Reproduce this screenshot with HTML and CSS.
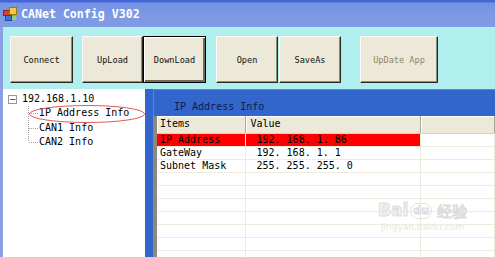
FILE: index.html
```html
<!DOCTYPE html>
<html>
	<head>
		<meta charset="UTF-8">
		<title>CANet Config V302</title>
		<link rel="stylesheet" href="styles.css">
	</head>
	<body>
		<div class="titlebar">
			<svg class="appicon" width="14" height="14" viewBox="0 0 14 14">
				<rect x="0.5" y="3.5" width="6" height="5" fill="#e03c28" stroke="#7a2a20"/>
				<rect x="6.5" y="0.5" width="7" height="7" fill="#f6c83a" stroke="#9a7a18"/>
				<rect x="2.5" y="8.5" width="6" height="5" fill="#3c78d8" stroke="#23468a"/>
				<rect x="9" y="9" width="4" height="4" fill="#9ad06a"/>
			</svg>
			<span class="title">CANet Config V302</span>
		</div>
		<div class="client">
			<div class="toolbar">
				<button class="btn">Connect</button>
				<button class="btn up">UpLoad</button>
				<button class="btn down">DownLoad</button>
				<button class="btn open">Open</button>
				<button class="btn save">SaveAs</button>
				<button class="btn app" disabled>UpDate App</button>
			</div>
			<div class="main">
				<div class="tree">
					<div class="root"><span class="box">−</span>192.168.1.10</div>
					<ul class="kids">
						<li>IP Address Info</li>
						<li>CAN1 Info</li>
						<li>CAN2 Info</li>
					</ul>
					<svg class="ring" width="120" height="20" viewBox="0 0 120 20">
						<ellipse cx="59" cy="10" rx="57.5" ry="8.5" fill="none" stroke="#e05a5a" stroke-width="1"/>
					</svg>
				</div>
				<div class="split"></div>
				<div class="panel">
					<div class="panel-head">IP Address Info</div>
					<div class="grid-wrap">
						<table class="grid">
							<colgroup><col class="c1"><col class="c2"><col></colgroup>
							<tr><th>Items</th><th>Value</th><th></th></tr>
							<tr class="sel"><td>IP Address</td><td class="val">192. 168. 1. 86</td><td></td></tr>
							<tr><td>GateWay</td><td class="val">192. 168. 1. 1</td><td></td></tr>
							<tr><td>Subnet Mask</td><td class="val">255. 255. 255. 0</td><td></td></tr>
							<tr><td></td><td></td><td></td></tr>
							<tr><td></td><td></td><td></td></tr>
							<tr><td></td><td></td><td></td></tr>
							<tr><td></td><td></td><td></td></tr>
							<tr><td></td><td></td><td></td></tr>
							<tr><td></td><td></td><td></td></tr>
							<tr><td></td><td></td><td></td></tr>
						</table>
						<div class="mark">
							<div class="mark-top"><span>Bai</span><span class="paw">du</span><span class="cn">经验</span></div>
							<div class="mark-url">jingyan.baidu.com</div>
						</div>
					</div>
				</div>
			</div>
		</div>
	</body>
</html>
```
FILE: styles.css
```css
*{
	margin: 0;
	padding: 0;
	box-sizing: border-box;
}
body{
	width: 495px;
	height: 257px;
	overflow: hidden;
	background: #fff;
	font: 10px/14px "DejaVu Sans Mono", "Liberation Mono", monospace;
	display: flex;
	flex-direction: column;
}
.titlebar{
	height: 27px;
	flex: none;
	display: flex;
	align-items: center;
	gap: 4px;
	padding: 1px 0 0 3px;
	background: linear-gradient(#4566d6 0, #4566d6 2px, #7592e4 3px, #7d9ae6 60%, #7f9be4 100%);
}
.title{
	color: #fff;
	font: bold 11.6px/14px "DejaVu Sans Mono", monospace;
}
.client{
	flex: 1;
	display: flex;
	flex-direction: column;
	border-left: 3px solid #8aa0e0;
	min-height: 0;
}
.toolbar{
	height: 62px;
	flex: none;
	display: flex;
	align-items: flex-start;
	padding: 9px 0 0 7px;
	background: #b0efee;
}
.btn{
	width: 63px;
	height: 47px;
	background: #ece9d8;
	border: 1px solid;
	border-color: #fff #2a2a22 #2a2a22 #fff;
	box-shadow: inset -1px -1px #8c8a78;
	font: 8.6px "DejaVu Sans Mono", monospace;
	color: #111;
}
.btn.up{
	width: 61px;
	margin-left: 9px;
}
.btn.down{
	border: 1px solid #000;
	box-shadow: inset 1px 1px #fff, inset -2px -2px #6c6a5c;
}
.btn.open{
	width: 62px;
	margin-left: 10px;
}
.btn.save{
	width: 62px;
	margin-left: 1px;
}
.btn.app{
	width: 78px;
	margin-left: 19px;
	color: #8a8764;
}
.main{
	flex: 1;
	display: flex;
	min-height: 0;
}
.tree{
	width: 142px;
	position: relative;
	padding: 3px 0 0 5px;
	background: #fff;
	color: #000;
}
.root{
	display: flex;
	align-items: center;
	height: 14px;
}
.box{
	width: 9px;
	height: 9px;
	border: 1px solid #919b9c;
	font: 9px/7px "DejaVu Sans", sans-serif;
	text-align: center;
	color: #333;
	margin-right: 5px;
}
.kids{
	list-style: none;
	margin-left: 20px;
	border-left: 1px dotted #a0a0a0;
	height: 35px;
}
.kids li{
	height: 14.5px;
	padding-left: 10px;
	position: relative;
}
.kids li:before{
	content: "";
	position: absolute;
	left: 0;
	top: 7px;
	width: 9px;
	border-top: 1px dotted #a0a0a0;
}
.ring{
	position: absolute;
	left: 25px;
	top: 15px;
}
.split{
	width: 8px;
	background: #3366cc;
}
.panel{
	flex: 1;
	display: flex;
	flex-direction: column;
	background: #3366cc;
	min-width: 0;
}
.panel-head{
	height: 27px;
	flex: none;
	padding: 11px 0 0 20px;
	border-left: 1px solid #6a82c0;
	border-top: 1px solid #5a82d8;
	color: #0e1c4a;
	line-height: 12px;
}
.grid-wrap{
	flex: 1;
	position: relative;
	background: #fff;
	border-left: 4px solid #8c897a;
	overflow: hidden;
}
.grid{
	width: 100%;
	border-collapse: collapse;
	table-layout: fixed;
	color: #000;
}
.grid .c1{
	width: 88px;
}
.grid .c2{
	width: 175px;
}
.grid th{
	height: 17px;
	background: #ece9d8;
	font-weight: normal;
	text-align: left;
	padding-left: 3px;
	border-right: 1px solid #aca899;
	border-bottom: 1px solid #d6d2c2;
	box-shadow: inset 1px 1px #fff;
}
.grid th:nth-child(2){
	padding-left: 5px;
}
.grid td{
	height: 13px;
	line-height: 12px;
	padding-left: 3px;
	border-bottom: 1px solid #efecdf;
	border-right: 1px solid #efecdf;
	white-space: pre;
}
.grid td.val{
	padding-left: 11px;
}
.grid tr.sel td:nth-child(-n+2){
	background: #ff0000;
}
.mark{
	position: absolute;
	left: 221px;
	top: 86px;
	color: #f4f4f4;
	text-align: center;
}
.mark-top{
	display: flex;
	align-items: flex-end;
	gap: 2px;
	font: bold 17px/17px "DejaVu Sans", sans-serif;
	-webkit-text-stroke: 1px #dcdcdc;
}
.paw{
	font-size: 11px;
	line-height: 14px;
	border: 1px solid #e2e2e2;
	border-radius: 8px;
	padding: 0 2px;
}
.cn{
	font: 15px/17px "Noto Sans CJK SC", sans-serif;
	margin-left: 3px;
}
.mark-url{
	font: 9px/12px "DejaVu Sans", sans-serif;
	color: #e6e6e6;
	margin-top: 2px;
}
```
